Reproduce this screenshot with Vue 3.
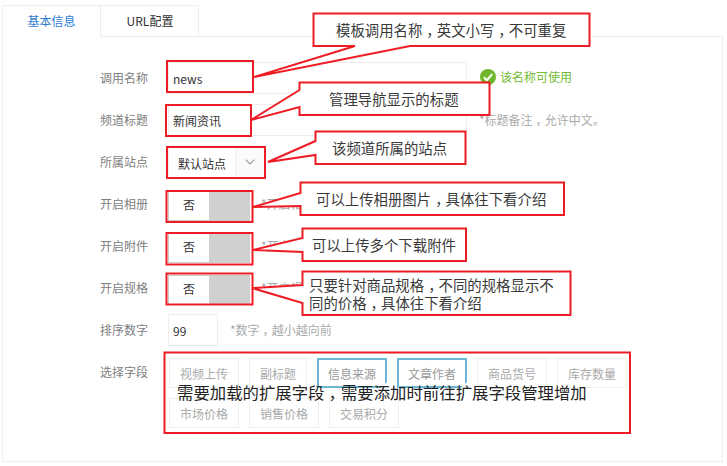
<script setup>
const switches = [
  { label: '开启相册', hint: '*开启相册' },
  { label: '开启附件', hint: '*开启附件' },
  { label: '开启规格', hint: '*开启规格' }
]
const fields = [
  { name: '视频上传' }, { name: '副标题' }, { name: '信息来源', on: true }, { name: '文章作者', on: true },
  { name: '商品货号' }, { name: '库存数量' }, { name: '市场价格' }, { name: '销售价格' }, { name: '交易积分' }
]
const shapes = [
  '167,61 253,61 253,92 167,92',
  '166,105 251,105 251,136 166,136',
  '167,147 265,147 265,178 167,178',
  '166.5,191 252.5,191 252.5,222 166.5,222',
  '166.5,233 252.5,233 252.5,264.5 166.5,264.5',
  '166.5,273.5 252.5,273.5 252.5,304.5 166.5,304.5',
  '164.5,352.5 630,352.5 630,433 164.5,433'
]
const callouts = [
  '313.5,13.5 589.5,13.5 589.5,46 410,46 254,77 355,46 313.5,46',
  '299.5,82.5 489.5,82.5 489.5,115 299.5,115 299.5,107 251,120 299.5,90',
  '315.5,131.5 465.5,131.5 465.5,164 315.5,164 315.5,155 268,162 315.5,141',
  '300.5,182.5 564,182.5 564,215 300.5,215 300.5,206 253,207 300.5,193',
  '302.5,228.5 466,228.5 466,261 302.5,261 302.5,252 253,250 302.5,238',
  '302.5,271.5 570.5,271.5 570.5,315 302.5,315 302.5,303 252,288 302.5,285'
]
const notes = [
  { x: 336, y: 29, t: '模板调用名称，英文小写，不可重复' },
  { x: 329, y: 98, t: '管理导航显示的标题' },
  { x: 332, y: 147, t: '该频道所属的站点' },
  { x: 316, y: 198, t: '可以上传相册图片，具体往下看介绍' },
  { x: 312, y: 244, t: '可以上传多个下载附件' },
  { x: 309, y: 284, t: '只要针对商品规格，不同的规格显示不' },
  { x: 309, y: 302, t: '同的价格，具体往下看介绍' },
  { x: 177, y: 392, t: '需要加载的扩展字段，需要添加时前往扩展字段管理增加', big: true }
]
</script>

<template>
  <div class="page">
    <div class="tabs">
      <div class="tab active">基本信息</div>
      <div class="tab">URL配置</div>
    </div>
    <div class="panel">
      <div class="row">
        <span class="label">调用名称</span>
        <div class="input wide">news</div>
        <svg class="ok" width="16" height="16" viewBox="0 0 16 16">
          <circle cx="8" cy="8" r="8" fill="#6fb82c" />
          <path d="M3.8 8.2 L6.9 11.2 L12.2 5.2" fill="none" stroke="#fff" stroke-width="2" />
        </svg>
        <span class="good">该名称可使用</span>
      </div>
      <div class="row">
        <span class="label">频道标题</span>
        <div class="input wide">新闻资讯</div>
        <span class="hint">*标题备注<span class="comma">，</span>允许中文。</span>
      </div>
      <div class="row">
        <span class="label">所属站点</span>
        <div class="select">
          <span class="select-text">默认站点</span>
          <span class="select-arrow">
            <svg width="10" height="6" viewBox="0 0 10 6"><path d="M.7.7 5 5 9.3.7" fill="none" stroke="#999" stroke-width="1.1" /></svg>
          </span>
        </div>
      </div>
      <div v-for="s in switches" :key="s.label" class="row">
        <span class="label">{{ s.label }}</span>
        <div class="switch"><span class="switch-off">否</span><span class="switch-knob"></span></div>
        <span class="hint">{{ s.hint }}</span>
      </div>
      <div class="row">
        <span class="label">排序数字</span>
        <div class="input small">99</div>
        <span class="hint">*数字<span class="comma">，</span>越小越向前</span>
      </div>
      <div class="row top">
        <span class="label">选择字段</span>
        <div class="fields">
          <span v-for="f in fields" :key="f.name" class="field" :class="{ on: f.on }">{{ f.name }}</span>
        </div>
      </div>
    </div>
    <svg class="marks" width="727" height="466" viewBox="0 0 727 466">
      <polygon v-for="(p, i) in shapes" :key="'s' + i" :points="p" class="frame" />
      <polygon v-for="(p, i) in callouts" :key="'c' + i" :points="p" class="callout" />
      <text v-for="n in notes" :key="n.t" :x="n.x" :y="n.y" class="note" :class="{ big: n.big }" dominant-baseline="central">
        <template v-for="(part, i) in n.t.split('，')" :key="i"><tspan v-if="i" dominant-baseline="central" dx="4">，</tspan><tspan dominant-baseline="central" :dx="i ? -4 : 0">{{ part }}</tspan></template>
      </text>
    </svg>
  </div>
</template>

<style scoped>
.page {
  position: relative;
  width: 727px;
  height: 466px;
  background: #fff;
  overflow: hidden;
  font-family: "Noto Sans CJK SC", "Noto Sans", sans-serif;
  font-size: 12px;
  color: #333;
  box-sizing: border-box;
  padding: 5px 4px 4px 2px;
}
.tabs { display: flex; height: 32px; box-sizing: border-box; }
.tab {
  width: 98px;
  height: 32px;
  box-sizing: border-box;
  border: 1px solid #eee;
  border-left: 0;
  display: flex;
  align-items: center;
  justify-content: center;
  padding: 0 0 2px 1px;
}
.tab.active {
  width: 99px;
  color: #2f7ed0;
  border-left: 1px solid #eee;
  border-bottom: 0;
  padding-left: 0;
  background: #fff;
  position: relative;
  z-index: 1;
}
.panel {
  margin-top: -1px;
  height: 426px;
  box-sizing: border-box;
  border: 1px solid #eee;
  padding: 25px 0 0 97px;
  display: flex;
  flex-direction: column;
  gap: 10px;
}
.row { display: flex; align-items: center; height: 32px; }
.row.top { align-items: flex-start; height: auto; }
.label { width: 68px; flex: none; color: #808080; padding-bottom: 2px; }
.row.top .label { line-height: 32px; padding-bottom: 0; }
.input {
  height: 32px;
  box-sizing: border-box;
  border: 1px solid #eee;
  padding-left: 4px;
  display: flex;
  align-items: center;
}
.input.wide { width: 299px; }
.input.small { width: 50px; }
.hint { margin-left: 12px; color: #aaa; padding-bottom: 2px; }
.comma { margin: 0 -3px 0 3px; }
.switch + .hint { margin-left: 11px; }
.ok { margin-left: 13px; margin-bottom: 2px; }
.good { margin-left: 4px; color: #73bc35; padding-bottom: 3px; }
.select {
  width: 97px;
  height: 32px;
  box-sizing: border-box;
  border: 1px solid #eee;
  display: flex;
  align-items: stretch;
}
.select-text { flex: 1; display: flex; align-items: center; justify-content: center; padding-top: 3px; }
.select-arrow { width: 28px; display: flex; align-items: center; justify-content: center; background: #fafafa; border-left: 1px solid #eee; }
.switch {
  width: 82px;
  height: 30px;
  margin-top: 4px;
  box-sizing: border-box;
  border: 1px solid #ccc;
  display: flex;
}
.switch-off { width: 40px; display: flex; align-items: center; justify-content: center; background: #fff; padding-bottom: 3px; box-sizing: border-box; }
.switch-knob { flex: 1; background: #d0d0d0; }
.fields { width: 470px; display: flex; flex-wrap: wrap; gap: 10px; padding: 2px 0 0 1px; }
.field {
  position: relative;
  height: 30px;
  box-sizing: border-box;
  border: 1px solid #f0f0f0;
  padding: 0 10px;
  display: flex;
  align-items: center;
  color: #aaa;
}
.field.on { border: 2px solid #6cb7d6; padding: 0 9px; color: #999; }
.field.on::after {
  content: "";
  position: absolute;
  right: -2px;
  bottom: -2px;
  border-style: solid;
  border-width: 0 0 6px 6px;
  border-color: transparent transparent #fff transparent;
}
.marks { position: absolute; left: 0; top: 0; }
.frame { fill: none; stroke: #ee1c25; stroke-width: 2; }
.callout { fill: #fff; stroke: #ee1c25; stroke-width: 2; stroke-linejoin: miter; }
.note { font-size: 14.4px; fill: #3a3a3a; }
.note.big { font-size: 16.4px; fill: #222; }
</style>
